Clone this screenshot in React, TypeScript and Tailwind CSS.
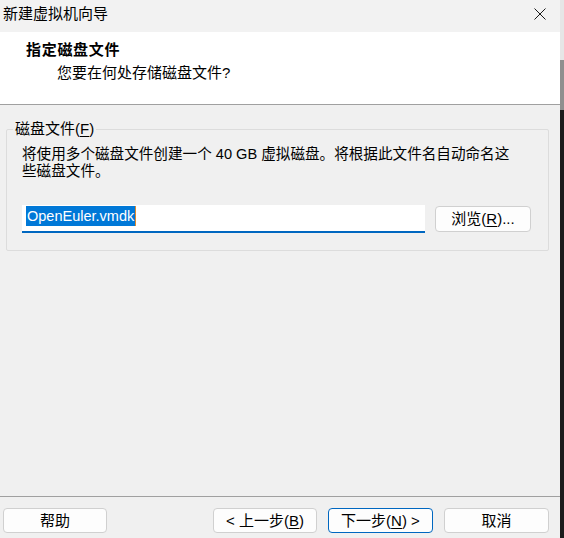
import React from 'react';

const cjk = '"Liberation Sans", "Noto Sans CJK SC", sans-serif';

function Mnemonic({ children }: { children: string }) {
  return <span className="underline underline-offset-[2px] decoration-1">{children}</span>;
}

interface WinButtonProps {
  children: React.ReactNode;
  primary?: boolean;
  width: string;
}

function WinButton({ children, primary, width }: WinButtonProps) {
  return (
    <div
      className={`${width} h-[25px] rounded-[4px] border bg-[#fdfdfd] flex items-center justify-center text-[15px] leading-[20px] text-black ${
        primary ? 'border-[#0067c0]' : 'border-[#d0d0d0]'
      }`}
    >
      {children}
    </div>
  );
}

export default function App() {
  return (
    <div className="w-[564px] h-[538px] flex overflow-hidden bg-[#f0f0f0]" style={{ fontFamily: cjk }}>
      <div className="w-[560px] h-full flex flex-col">
        {/* title bar */}
        <div className="h-[32px] bg-[#f2f2f2] flex items-center justify-between pl-[3px] pr-[14px] shrink-0">
          <span className="text-[15px] leading-[20px] text-black -mt-[5px]">新建虚拟机向导</span>
          <svg width="12" height="12" viewBox="0 0 12 12" className="-mt-[5px]">
            <path d="M0.5 0.5 L11.5 11.5 M11.5 0.5 L0.5 11.5" stroke="#1a1a1a" strokeWidth="1" fill="none" />
          </svg>
        </div>

        {/* header */}
        <div className="h-[73px] bg-white border-b border-[#a0a0a0] pl-[26px] pt-[8px] shrink-0">
          <div className="text-[15px] leading-[20px] font-bold tracking-[0.7px] text-black">指定磁盘文件</div>
          <div className="ml-[31px] mt-[3px] text-[15px] leading-[20px] text-black">您要在何处存储磁盘文件?</div>
        </div>

        {/* body */}
        <div className="flex-1 bg-[#f0f0f0]">
          <fieldset className="ml-[6px] mt-[14px] w-[543px] border border-[#dcdcdc] rounded-[2px] pl-[15px] pr-[16px] pt-[7px] pb-[17px]">
            <legend className="-ml-[9px] px-[2px] text-[15px] leading-[20px] text-black">
              磁盘文件(<Mnemonic>F</Mnemonic>)
            </legend>
            <div className="text-[14.6px] leading-[17px] text-black whitespace-nowrap">
              <div>将使用多个磁盘文件创建一个 40 GB 虚拟磁盘。将根据此文件名自动命名这</div>
              <div>些磁盘文件。</div>
            </div>
            <div className="mt-[25px] flex items-center gap-[10px]">
              <div className="w-[403px] h-[28px] bg-white border-b-2 border-[#0067c0] pl-[4px] pt-[1px] flex items-start">
                <span
                  className="bg-[#0078d7] text-white text-[14.5px] leading-[20px] px-[1px]"
                  style={{ fontFamily: '"Liberation Sans", sans-serif' }}
                >
                  OpenEuler.vmdk
                </span>
                <span className="w-[1px] h-[20px] bg-[#e08a2c]" />
              </div>
              <div className="w-[96px] h-[26px] rounded-[4px] border border-[#d0d0d0] bg-[#fdfdfd] flex items-center justify-center text-[15px] leading-[20px] text-black">
                浏览(<Mnemonic>R</Mnemonic>)...
              </div>
            </div>
          </fieldset>
        </div>

        {/* footer */}
        <div className="h-[42px] border-t border-[#a0a0a0] bg-[#f0f0f0] flex items-start justify-between pl-[3px] pr-[11px] pt-[11px] shrink-0">
          <WinButton width="w-[104px]">帮助</WinButton>
          <div className="flex gap-[11px]">
            <WinButton width="w-[104px]">
              &lt; 上一步(<Mnemonic>B</Mnemonic>)
            </WinButton>
            <WinButton width="w-[105px]" primary>
              下一步(<Mnemonic>N</Mnemonic>) &gt;
            </WinButton>
            <WinButton width="w-[105px]">取消</WinButton>
          </div>
        </div>
      </div>

      {/* edge of the window behind */}
      <div className="w-[4px] h-full flex flex-col">
        <div className="h-[60px] bg-[#e6e6e6]" />
        <div className="h-[50px] bg-[#8f8f8f]" />
        <div className="flex-1 bg-[#1c1c1c]" />
      </div>
    </div>
  );
}
